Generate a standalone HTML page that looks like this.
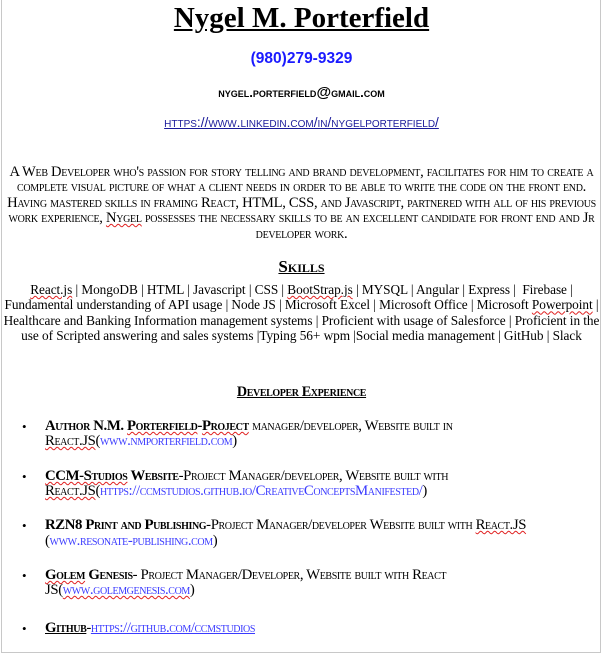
<!DOCTYPE html>
<html><head><meta charset="utf-8"><style>
html,body{margin:0;padding:0;background:#fff;}
body{width:603px;height:654px;position:relative;overflow:hidden;font-family:"Liberation Serif",serif;color:#000;}
.frame{position:absolute;left:1px;top:-2px;width:598px;height:653px;border:1px solid #c8c8c8;}
.l{position:absolute;white-space:nowrap;}
.c{left:0;width:603px;text-align:center;}
.sc{font-variant:small-caps;}
.lk{color:#3a3aff;}
.sq{text-decoration:underline wavy #e02020;text-decoration-thickness:1px;}
.b{font-weight:bold;}
.bul{position:absolute;left:22px;font-size:13px;}
.ex{font-size:14.8px;letter-spacing:-0.4px;}
</style></head><body>
<div class="frame"></div>
<div class="l c b" style="top:2px;font-size:29px;text-decoration:underline;">Nygel M. Porterfield</div>
<div class="l c b" style="top:50px;font-family:'Liberation Sans',sans-serif;font-size:15.5px;color:#1a1aff;">(980)279-9329</div>
<div class="l c sc b" style="top:84px;font-family:'Liberation Sans',sans-serif;font-size:13.2px;">nygel.porterfield<span style="font-size:15px">@</span>gmail.com</div>
<div class="l c sc" style="top:115px;font-family:'Liberation Sans',sans-serif;font-size:13.7px;color:#1a1a9a;text-decoration:underline;">https://www.linkedin.com/in/nygelporterfield/</div>

<div class="sc" style="position:absolute;left:-10px;width:623px;top:165px;text-align:center;font-size:14.6px;line-height:15.4px;letter-spacing:-0.3px;">
A Web Developer who's passion for story telling and brand development, facilitates for him to create a<br>complete visual picture of what a client needs in order to be able to write the code on the front end.<br>Having mastered skills in framing React, HTML, CSS, and Javascript, partnered with all of his previous<br>work experience, <span class="sq">Nygel</span> possesses the necessary skills to be an excellent candidate for front end and Jr<br>developer work.</div>

<div class="l c sc b" style="top:257px;font-size:17px;text-decoration:underline;">Skills</div>
<div style="position:absolute;left:-5px;width:613px;top:282px;text-align:center;font-size:13.3px;line-height:15.4px;letter-spacing:-0.06px;">
<span class="sq">React.js</span> | MongoDB | HTML | Javascript | CSS | <span class="sq">BootStrap.js</span> | MYSQL | Angular | Express |&nbsp; Firebase |<br>Fundamental understanding of API usage | Node JS | Microsoft Excel | Microsoft Office | Microsoft <span class="sq">Powerpoint</span> |<br>Healthcare and Banking Information management systems | Proficient with usage of Salesforce | Proficient in the<br>use of Scripted answering and sales systems |Typing 56+ wpm |Social media management | GitHub | Slack</div>

<div class="l c sc b" style="top:384px;font-size:14.2px;text-decoration:underline;letter-spacing:-0.4px;">Developer Experience</div>

<div class="bul" style="top:419px;">•</div>
<div class="l sc ex" style="left:45px;top:418px;"><b>Author N.M. <span class="sq">Porterfield</span>-<span class="sq">Project</span></b> manager/developer, Website built in</div>
<div class="l sc ex" style="left:45px;top:433px;"><span class="sq">React.JS</span>(<span class="lk">www.nmporterfield.com</span>)</div>

<div class="bul" style="top:469px;">•</div>
<div class="l sc ex" style="left:45px;top:468px;"><b><span class="sq">CCM-Studios</span> Website</b>-Project Manager/developer, Website built with</div>
<div class="l sc ex" style="left:45px;top:483px;"><span class="sq">React.JS</span>(<span class="lk">https://ccmstudios.github.io/CreativeConceptsManifested/</span>)</div>

<div class="bul" style="top:518px;">•</div>
<div class="l sc ex" style="left:45px;top:517px;"><b>RZN8 Print and Publishing</b>-Project Manager/developer Website built with <span class="sq">React.JS</span></div>
<div class="l sc ex" style="left:45px;top:533px;">(<span class="lk">www.resonate-publishing.com</span>)</div>

<div class="bul" style="top:568px;">•</div>
<div class="l sc ex" style="left:45px;top:567px;"><b><span class="sq">Golem</span> Genesis</b>- Project Manager/Developer, Website built with React</div>
<div class="l sc ex" style="left:45px;top:582px;">JS(<span class="lk sq">www.golemgenesis.com</span>)</div>

<div class="bul" style="top:621px;">•</div>
<div class="l sc ex" style="left:45px;top:620px;"><b style="text-decoration:underline">Github</b>-<span class="lk" style="text-decoration:underline">https://github.com/ccmstudios</span></div>
</body></html>
